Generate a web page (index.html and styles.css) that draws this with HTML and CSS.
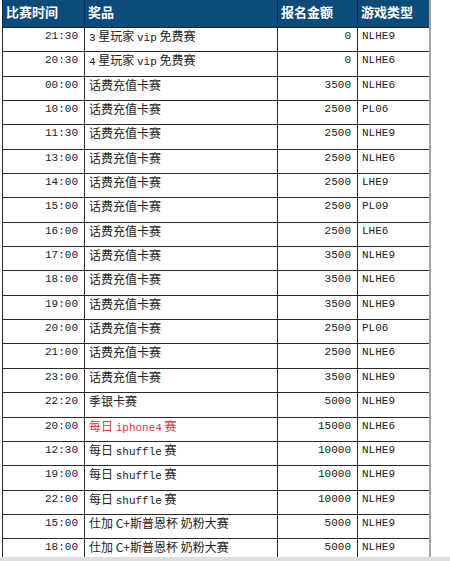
FILE: index.html
```html
<!DOCTYPE html>
<html lang="zh">
<head>
<meta charset="utf-8">
<link rel="stylesheet" href="styles.css">
</head>
<body>
<div class="frame">
<table class="sched">
<colgroup><col class="c1"><col class="c2"><col class="c3"><col class="c4"></colgroup>
<thead>
<tr><th>比赛时间</th><th>奖品</th><th>报名金额</th><th>游戏类型</th></tr>
</thead>
<tbody>
<tr><td class="t">21:30</td><td><span class="en">3</span> 星玩家 <span class="en">vip</span> 免费赛</td><td class="n">0</td><td class="g">NLHE9</td></tr>
<tr><td class="t">20:30</td><td><span class="en">4</span> 星玩家 <span class="en">vip</span> 免费赛</td><td class="n">0</td><td class="g">NLHE6</td></tr>
<tr><td class="t">00:00</td><td>话费充值卡赛</td><td class="n">3500</td><td class="g">NLHE6</td></tr>
<tr><td class="t">10:00</td><td>话费充值卡赛</td><td class="n">2500</td><td class="g">PL06</td></tr>
<tr><td class="t">11:30</td><td>话费充值卡赛</td><td class="n">2500</td><td class="g">NLHE9</td></tr>
<tr><td class="t">13:00</td><td>话费充值卡赛</td><td class="n">2500</td><td class="g">NLHE6</td></tr>
<tr><td class="t">14:00</td><td>话费充值卡赛</td><td class="n">2500</td><td class="g">LHE9</td></tr>
<tr><td class="t">15:00</td><td>话费充值卡赛</td><td class="n">2500</td><td class="g">PL09</td></tr>
<tr><td class="t">16:00</td><td>话费充值卡赛</td><td class="n">2500</td><td class="g">LHE6</td></tr>
<tr><td class="t">17:00</td><td>话费充值卡赛</td><td class="n">3500</td><td class="g">NLHE9</td></tr>
<tr><td class="t">18:00</td><td>话费充值卡赛</td><td class="n">3500</td><td class="g">NLHE6</td></tr>
<tr><td class="t">19:00</td><td>话费充值卡赛</td><td class="n">3500</td><td class="g">NLHE9</td></tr>
<tr><td class="t">20:00</td><td>话费充值卡赛</td><td class="n">2500</td><td class="g">PL06</td></tr>
<tr><td class="t">21:00</td><td>话费充值卡赛</td><td class="n">2500</td><td class="g">NLHE6</td></tr>
<tr><td class="t">23:00</td><td>话费充值卡赛</td><td class="n">3500</td><td class="g">NLHE9</td></tr>
<tr><td class="t">22:20</td><td>季银卡赛</td><td class="n">5000</td><td class="g">NLHE9</td></tr>
<tr><td class="t">20:00</td><td class="red">每日 <span class="en">iphone4</span> 赛</td><td class="n">15000</td><td class="g">NLHE6</td></tr>
<tr><td class="t">12:30</td><td>每日 <span class="en">shuffle</span> 赛</td><td class="n">10000</td><td class="g">NLHE9</td></tr>
<tr><td class="t">19:00</td><td>每日 <span class="en">shuffle</span> 赛</td><td class="n">10000</td><td class="g">NLHE9</td></tr>
<tr><td class="t">22:00</td><td>每日 <span class="en">shuffle</span> 赛</td><td class="n">10000</td><td class="g">NLHE9</td></tr>
<tr><td class="t">15:00</td><td>仕加 C+斯普恩杯 奶粉大赛</td><td class="n">5000</td><td class="g">NLHE9</td></tr>
<tr><td class="t">18:00</td><td>仕加 C+斯普恩杯 奶粉大赛</td><td class="n">5000</td><td class="g">NLHE9</td></tr>
</tbody>
</table>
</div>
</body>
</html>
```
FILE: styles.css
```css
html, body {
  margin: 0;
  padding: 0;
  background: #ffffff;
  overflow: hidden;
}
.frame {
  height: 557px;
  overflow: hidden;
  padding-left: 2px;
  border-bottom: 4px solid #dedede;
}
.sched {
  border-collapse: collapse;
  table-layout: fixed;
  width: 427px;
  border-left: 1px solid #222222;
  border-right: 2px solid #a3a3a3;
  font-family: "Noto Sans CJK SC", "Noto Sans", sans-serif;
  font-size: 12px;
  color: #222222;
}
.c1 { width: 82px; }
.c2 { width: 193px; }
.c3 { width: 80px; }
.c4 { width: 72px; }
.sched th {
  background: #0d4b7b;
  color: #ffffff;
  font-weight: bold;
  font-size: 13px;
  text-align: left;
  height: 24px;
  padding: 3px 3px 0;
  line-height: 18px;
  vertical-align: top;
  border-left: 1px solid #06304f;
  border-bottom: 1px solid #222222;
}
.sched th:first-child {
  border-left: 1px solid #222222;
}
.sched td {
  height: 22.35px;
  padding: 1px 5px 0 4px;
  line-height: 14px;
  vertical-align: top;
  border: 1px solid #2a2a2a;
  white-space: nowrap;
  overflow: hidden;
}
.sched td.t,
.sched td.n,
.sched td.g,
.en {
  font-family: "Liberation Mono", "DejaVu Sans Mono", monospace;
  font-size: 11px;
}
.sched td.t,
.sched td.n {
  text-align: right;
  padding-right: 6px;
}
.sched td.red {
  color: #e5323a;
}
```
